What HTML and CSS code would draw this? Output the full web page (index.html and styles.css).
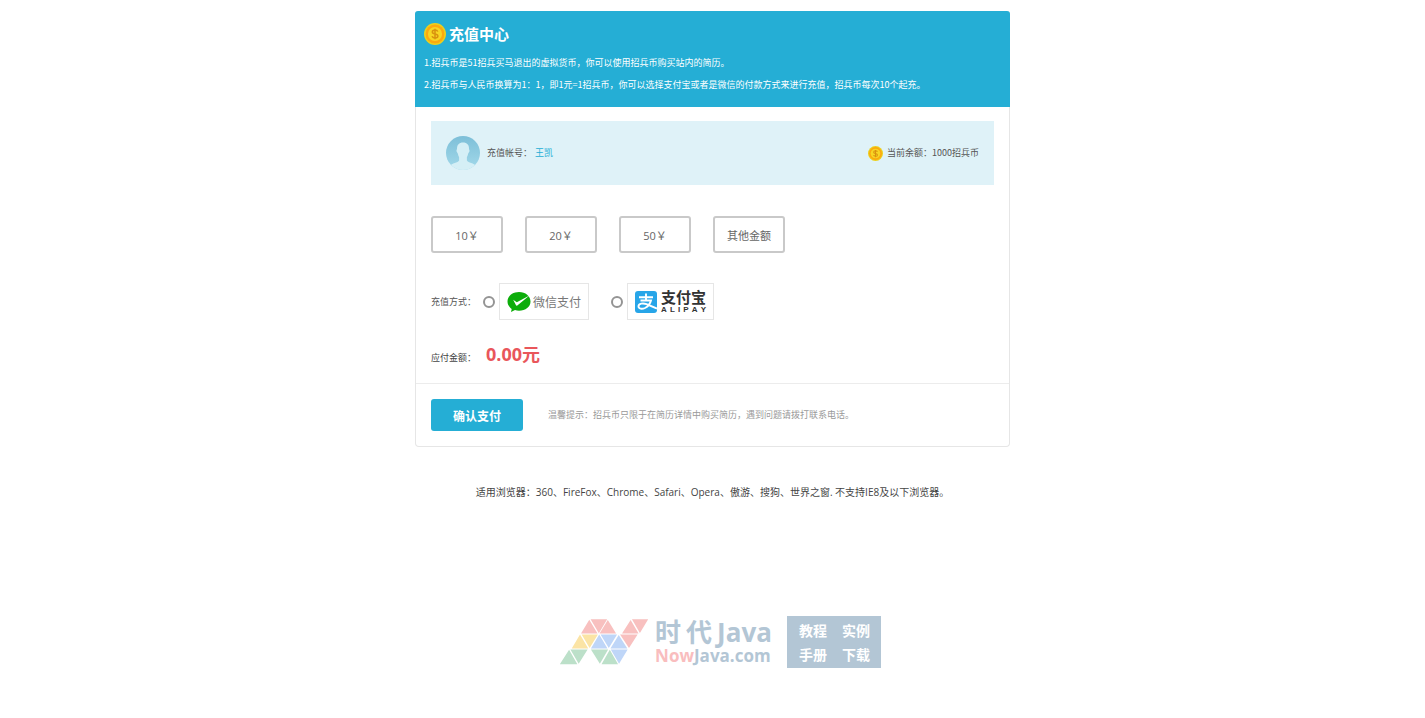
FILE: index.html
```html
<!DOCTYPE html>
<html lang="zh-CN">
<head>
<meta charset="utf-8">
<title>充值中心</title>
<meta name="viewport" content="width=device-width, initial-scale=1">
<link rel="stylesheet" href="styles.css">
</head>
<body>
<svg class="defs" aria-hidden="true">
  <symbol id="coin" viewBox="0 0 24 24">
    <circle cx="12" cy="12" r="12" fill="#ecd01c"/>
    <circle cx="12" cy="12" r="10.300" fill="#fba90f"/>
    <circle cx="12" cy="12" r="7.700" fill="#f7d524"/>
    <path d="M15 9.400C14.600 8.100 13.400 7.700 12 7.700c-1.700 0-2.900.8-2.900 2.100 0 3 6 1.400 6 4.400 0 1.400-1.300 2.200-3 2.200-1.600 0-2.900-.6-3.200-2M12 6.200v11.600" fill="none" stroke="#d9920f" stroke-width="1.700"/>
  </symbol>
</svg>
<main class="card">
  <header class="card-head">
    <h1 class="title"><svg class="coin-large" aria-hidden="true"><use href="#coin"/></svg>充值中心</h1>
    <p class="note">1.招兵币是51招兵买马退出的虚拟货币，你可以使用招兵币购买站内的简历。</p>
    <p class="note">2.招兵币与人民币换算为1：1，即1元=1招兵币，你可以选择支付宝或者是微信的付款方式来进行充值，招兵币每次10个起充。</p>
  </header>
  <form>
    <div class="card-body">
      <section class="account">
        <svg class="avatar" viewBox="0 0 34 34" aria-hidden="true">
          <defs><linearGradient id="sky" x1="0" y1="0" x2="0" y2="1"><stop offset="0" stop-color="#7dbfd8"/><stop offset="1" stop-color="#a3d9ea"/></linearGradient><clipPath id="round"><circle cx="17" cy="17" r="17"/></clipPath></defs>
          <circle cx="17" cy="17" r="17" fill="url(#sky)"/>
          <path clip-path="url(#round)" d="M17 6.500c-4 0-6 2.500-6 6 0 1-.6 1.200-.5 2.500.1 1.200.9 1.600 1.300 2.600.4 1.600.6 2.600 1.300 3.600v3.300c-1 2.500-7.500 2.500-9 5.500V34h25.800v-4c-1.500-3-8-3-9-5.500v-3.300c.7-1 .9-2 1.300-3.600.4-1 1.200-1.400 1.300-2.600.1-1.300-.5-1.500-.5-2.500 0-3.500-2-6-6-6z" fill="#d5eff6"/>
        </svg>
        <span>充值帐号：</span><a class="user" href="#">王凯</a>
        <span class="balance"><svg class="coin-small" aria-hidden="true"><use href="#coin"/></svg>当前余额：1000招兵币</span>
      </section>
      <div class="amounts">
        <button type="button" class="amount">10￥</button>
        <button type="button" class="amount">20￥</button>
        <button type="button" class="amount">50￥</button>
        <button type="button" class="amount">其他金额</button>
      </div>
      <div class="methods">
        <span class="methods-label">充值方式：</span>
        <label class="method"><input class="radio" type="radio" name="pay">
          <span class="brand wechat">
            <svg class="brand-icon" viewBox="0 0 24 21" aria-hidden="true"><path d="M12 .5C5.500.5.500 4.700.500 10c0 3 1.700 5.600 4.200 7.400L4 20.600l4-2c1.200.4 2.600.6 4 .6 6.500 0 11.500-4.100 11.500-9.300S18.500.5 12 .5z" fill="#0cad0a"/><path d="M6.200 8.300l3.600 2.400L22.500 4 10.300 14c-.5.4-1 .3-1.300-.2z" fill="#fff"/></svg>
            <span class="wechat-name">微信支付</span>
          </span>
        </label>
        <label class="method"><input class="radio" type="radio" name="pay">
          <span class="brand alipay">
            <svg class="brand-icon" viewBox="0 0 22 22" aria-hidden="true"><rect width="22" height="22" rx="3" fill="#27a5e8"/><path d="M4 6.300h14M11 2.500v7M5.500 9.500h10.500c-.8 3-3 6-6 7.500-3 1.400-6.500.8-6.500-1.700 0-2.800 4.500-3.600 8-2.100L22 17.500" fill="none" stroke="#fff" stroke-width="1.900"/></svg>
            <span class="alipay-name"><b class="alipay-cn">支付宝</b><span class="alipay-en"><i>A</i><i>L</i><i>I</i><i>P</i><i>A</i><i>Y</i></span></span>
          </span>
        </label>
      </div>
      <div class="total"><span>应付金额：</span><output class="price">0.00元</output></div>
    </div>
    <footer class="card-foot">
      <button type="submit" class="submit">确认支付</button>
      <span class="tip">温馨提示：招兵币只限于在简历详情中购买简历，遇到问题请拨打联系电话。</span>
    </footer>
  </form>
</main>
<p class="browsers">适用浏览器：360、FireFox、Chrome、Safari、Opera、傲游、搜狗、世界之窗. 不支持IE8及以下浏览器。</p>
<aside class="site">
  <svg class="site-mark" viewBox="26 43 271 139" aria-hidden="true">
    <g fill="#f8c0bf"><path d="M117 45l25 42H92zM121 44h50l-25 42zM173 46l25 41h-50zM242 46l-26 41h50zM246 44h49l-25 41zM210 90h53l-26 41z"/></g>
    <g fill="#fbe4a5"><path d="M89 90l25 42H64zM94 90h49l-25 41z"/></g>
    <g fill="#bfd6f8"><path d="M147 90l25 42h-50zM151 90h50l-25 41zM206 91l26 41h-51zM182 135h51l-26 43z"/></g>
    <g fill="#bce0c9"><path d="M56 136l25 44H28zM60 135h52l-27 43zM122 135h52l-25 43zM179 136l25 44h-50z"/></g>
  </svg>
  <div class="site-name">
    <div class="site-cn"><span>时</span><span>代</span><span>Java</span></div>
    <div class="site-url"><span class="now">Now</span>Java.com</div>
  </div>
  <div class="site-tags"><span>教程</span><span>实例</span><span>手册</span><span>下载</span></div>
</aside>
</body>
</html>
```
FILE: styles.css
```css
* { box-sizing: border-box; }
body {
  margin: 0;
  padding: 11px 15px;
  background: #fff;
  color: #555;
  font: 9px/22px "Noto Sans CJK SC", sans-serif;
}
h1, p { margin: 0; }
button, input { font-family: inherit; }
a { color: #25aed5; text-decoration: none; }
svg { display: block; flex: none; }
.defs { position: absolute; width: 0; height: 0; }
.card {
  max-width: 595px;
  margin: 0 auto;
  border: 1px solid #e6e6e6;
  border-top: 0;
  border-radius: 4px;
}
.card-head {
  margin: 0 -1px;
  padding: 11px 9px;
  border-radius: 3px 3px 0 0;
  background: #25aed5;
  color: #fff;
}
.title {
  display: flex;
  align-items: center;
  gap: 3px;
  margin-bottom: 7px;
  font-size: 15px;
  line-height: 23px;
}
.coin-large { width: 22px; height: 22px; }
.coin-small { width: 15px; height: 15px; }
.card-body { padding: 14px 15px; }
.account {
  display: flex;
  align-items: center;
  min-height: 64px;
  padding: 15px;
  background: #dff2f8;
}
.avatar { width: 34px; height: 34px; margin-right: 7px; }
.user { margin-left: 3px; }
.balance { display: flex; align-items: center; gap: 4px; margin-left: auto; }
.amounts { display: flex; flex-wrap: wrap; gap: 22px; margin-top: 31px; }
.amount {
  width: 72px;
  height: 37px;
  padding: 0;
  border: 2px solid #c9c9c9;
  border-radius: 3px;
  background: #fff;
  color: #666;
  font-family: "Open Sans", "Noto Sans CJK SC", sans-serif;
  font-size: 11px;
}
.methods { display: flex; flex-wrap: wrap; align-items: center; margin-top: 30px; }
.methods-label { margin-right: 7px; }
.method { display: flex; align-items: center; gap: 4px; margin-right: 22px; }
.radio {
  appearance: none;
  width: 12px;
  height: 12px;
  margin: 0;
  border: 2px solid #949494;
  border-radius: 50%;
  background: #fff;
}
.radio:checked { background: #25aed5; }
.brand {
  display: flex;
  align-items: center;
  height: 37px;
  padding: 0 7px;
  border: 1px solid #e6e6e6;
}
.brand-icon { width: 22px; height: 22px; }
.wechat { gap: 2px; }
.wechat .brand-icon { width: 24px; }
.wechat-name { color: #777; font-size: 12px; }
.alipay { gap: 4px; }
.alipay-name { display: flex; flex-direction: column; color: #333; }
.alipay-cn { font-size: 15px; line-height: 16px; }
.alipay-en {
  display: flex;
  justify-content: space-between;
  font-family: "Liberation Sans", sans-serif;
  font-size: 8px;
  font-weight: 700;
  line-height: 9px;
}
.alipay-en i { font-style: normal; }
.total { display: flex; align-items: baseline; gap: 10px; margin-top: 22px; color: #444; }
.price {
  color: #e9565b;
  font-family: "Open Sans", "Noto Sans CJK SC", sans-serif;
  font-size: 18px;
  font-weight: 700;
  line-height: 25px;
}
.card-foot {
  display: flex;
  align-items: center;
  gap: 25px;
  padding: 15px;
  border-top: 1px solid #ececec;
}
.submit {
  width: 92px;
  height: 32px;
  padding: 0;
  border: 0;
  border-radius: 3px;
  background: #25aed5;
  color: #fff;
  font-size: 12px;
  font-weight: 700;
}
.tip { color: #999; }
.browsers {
  margin-top: 34px;
  color: #444;
  font-family: "Open Sans", "Noto Sans CJK SC", sans-serif;
  font-size: 10px;
  text-align: center;
}
.site {
  display: flex;
  justify-content: center;
  align-items: center;
  margin-top: 113px;
  padding-left: 15px;
  color: #b3c6d5;
  font-family: "Open Sans", "Noto Sans CJK SC", sans-serif;
  font-weight: 700;
}
.site-mark { width: 90px; height: 46px; margin-right: 6px; }
.site-name { margin-right: 15px; }
.site-cn { display: flex; gap: 5px; font-size: 26px; line-height: 28px; }
.site-url { font-size: 17px; line-height: 20px; }
.now { color: #f9bdbe; }
.site-tags {
  display: grid;
  grid-template-columns: auto auto;
  column-gap: 15px;
  padding: 3px 11px 1px 12px;
  background: #b3c6d5;
  color: #fff;
  font-size: 14px;
  line-height: 24px;
}
```
